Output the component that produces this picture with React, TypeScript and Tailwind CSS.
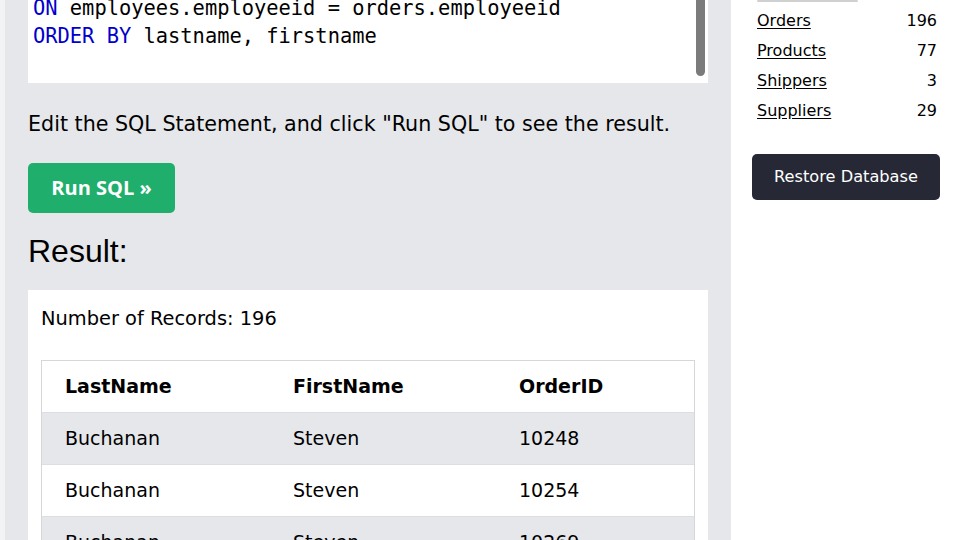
import React from "react";

const verdana = { fontFamily: "Verdana, 'DejaVu Sans', sans-serif" };

export default function App() {
  const rows = [
    ["Buchanan", "Steven", "10248"],
    ["Buchanan", "Steven", "10254"],
    ["Buchanan", "Steven", "10269"],
  ];
  const side = [
    ["Orders", "196"],
    ["Products", "77"],
    ["Shippers", "3"],
    ["Suppliers", "29"],
  ];
  return (
    <div className="flex h-[540px] w-[960px] overflow-hidden bg-white text-black" style={verdana}>
      <div className="w-[5px] shrink-0 bg-[#f2f3f4]" />
      <div className="flex w-[726px] shrink-0 flex-col bg-[#e5e7ea] px-[23px]">
        <div className="relative mt-[-6px] h-[89px] shrink-0 bg-white pl-[5px] pt-0 font-['DejaVu_Sans_Mono',monospace] text-[20.4px] leading-[28px]">
          <div>
            <span className="text-[#0000cd]">ON</span> employees.employeeid = orders.employeeid
          </div>
          <div>
            <span className="text-[#0000cd]">ORDER BY</span> lastname, firstname
          </div>
          <div className="absolute right-[3px] top-0 h-[82px] w-[9px] rounded-full bg-[#7b7b7b]" />
        </div>
        <p className="mt-[29px] shrink-0 text-[20.65px] leading-[24px]">
          Edit the SQL Statement, and click "Run SQL" to see the result.
        </p>
        <div className="mt-[27px] shrink-0">
          <button className="h-[50px] w-[147px] rounded-[5px] bg-[#1fae6b] font-['Open_Sans',sans-serif] text-[20px] font-bold text-white">
            Run SQL »
          </button>
        </div>
        <h2 className="mt-[20px] shrink-0 font-['Liberation_Sans',Arial,sans-serif] text-[32px] leading-[36px]">Result:</h2>
        <div className="mt-[21px] flex-1 shrink-0 bg-white px-[13px] pt-[17px]">
          <div className="text-[19.4px] leading-[24px]">Number of Records: 196</div>
          <div className="mt-[29px] w-[654px] border border-[#d5d7d9] text-[19px]">
            <div className="flex h-[51px] items-center font-bold">
              <div className="w-[228px] pl-[23px]">LastName</div>
              <div className="w-[226px] pl-[23px]">FirstName</div>
              <div className="flex-1 pl-[23px]">OrderID</div>
            </div>
            {rows.map((r, i) => (
              <div
                key={i}
                className={`flex h-[52px] items-center border-t border-[#dcdee0] ${i % 2 === 0 ? "bg-[#e5e7ea]" : "bg-white"}`}
              >
                <div className="w-[228px] pl-[23px]">{r[0]}</div>
                <div className="w-[226px] pl-[23px]">{r[1]}</div>
                <div className="flex-1 pl-[23px]">{r[2]}</div>
              </div>
            ))}
          </div>
        </div>
      </div>
      <div className="flex-1 pl-[21px] pr-[20px]">
        <div className="ml-[5px] h-[2px] w-[101px] rounded-full bg-[#d0d0d0]" />
        <div className="ml-[5px] mr-[3px] mt-[4px]">
          {side.map(([n, c]) => (
            <div key={n} className="flex h-[30px] items-center justify-between text-[16px]">
              <a className="underline underline-offset-2">{n}</a>
              <span>{c}</span>
            </div>
          ))}
        </div>
        <button className="mt-[28px] h-[46px] w-[188px] rounded-[5px] bg-[#262935] text-[16.2px] text-white">
          Restore Database
        </button>
      </div>
    </div>
  );
}
